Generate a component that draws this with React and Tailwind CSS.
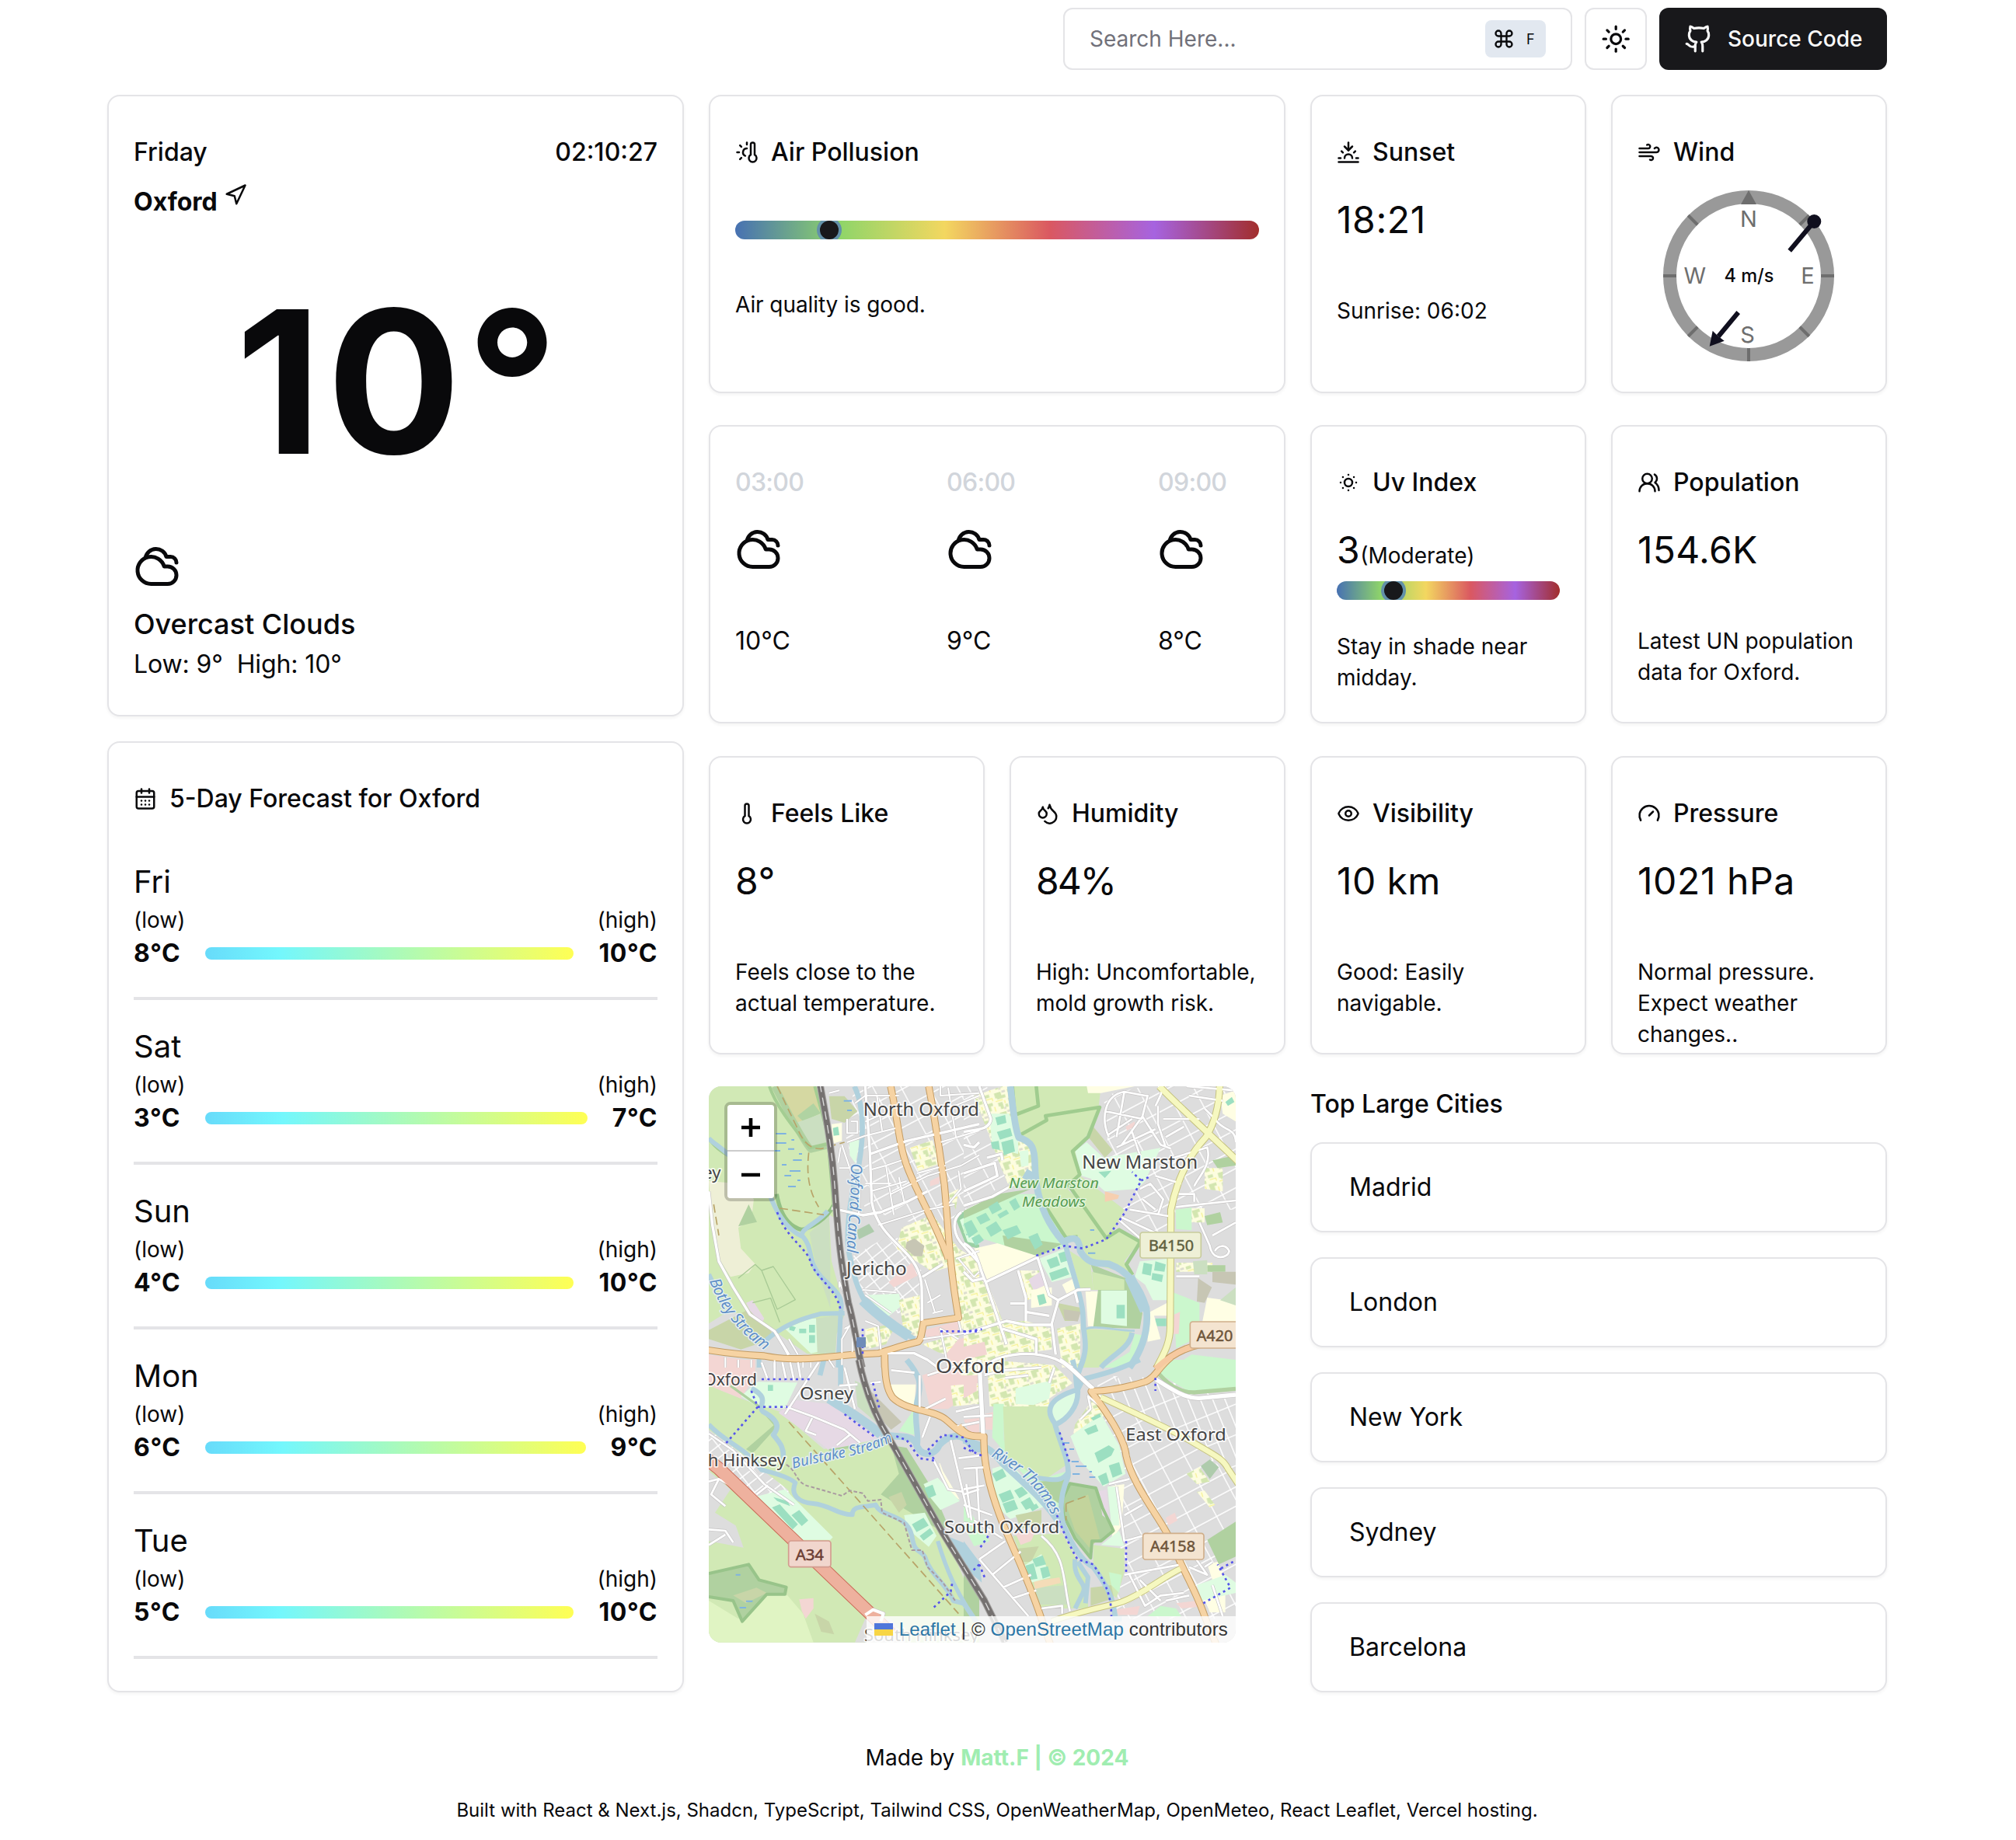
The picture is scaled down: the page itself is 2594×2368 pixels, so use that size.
import React from "react";
import {
  CalendarDays, Cloudy, Command, Droplets, Eye, Gauge, Github, Navigation, Sun, SunDim,
  Sunset, Thermometer, ThermometerSun, UsersRound, Wind,
} from "lucide-react";

const RAINBOW =
  "bg-[linear-gradient(90deg,#4771b2_0%,#8fd569_20%,#f3d760_40%,#da5861_60%,#a663e0_80%,#a22e2c_100%)]";
const TEMP =
  "bg-[linear-gradient(90deg,#67dbfa_0%,#73f7fd_20%,#ffff54_100%)]";

function Card({ className = "", children }) {
  return (
    <section className={"rounded-2xl border-2 border-[#e4e4e7] bg-white shadow-[0_2px_4px_rgba(0,0,0,0.05)] " + className}>
      {children}
    </section>
  );
}

function Title({ icon: Icon, children }) {
  return (
    <h2 className="flex h-8 items-center gap-4 text-[32px] leading-8 font-medium">
      <Icon size={30} strokeWidth={2} className="shrink-0" />
      <span className="whitespace-nowrap">{children}</span>
    </h2>
  );
}

function Scale({ value }) {
  return (
    <div className={"relative h-6 w-full overflow-hidden rounded-full " + RAINBOW}>
      <div
        className="absolute -top-1 size-8 -translate-x-1/2 rounded-full border-4 border-[#6a9db8]/90 bg-[#18181b]"
        style={{ left: value + "%" }}
      />
    </div>
  );
}

function Stat({ icon, title, value, text, tracking = "tracking-[0.6px]", children }) {
  return (
    <Card className="h-96 px-8 pt-[56px]">
      <Title icon={icon}>{title}</Title>
      {children || (
        <>
          <div className={"mt-[47px] h-12 text-[48px] leading-[48px] whitespace-nowrap " + tracking}>{value}</div>
          <p className="mt-[73px] text-[28px] leading-10">{text}</p>
        </>
      )}
    </Card>
  );
}

function Compass() {
  const ticks = [45, 90, 135, 180, 225, 270, 315];
  return (
    <svg width="220" height="220" viewBox="0 0 220 220" className="mt-[33px] ml-[33px] block overflow-visible font-['Inter',sans-serif]">
      <circle cx="110" cy="110" r="101.5" fill="none" stroke="#999" strokeWidth="17" />
      {ticks.map((t) => (
        <path key={t} d="M110 0V17" stroke="#6e6e6e" strokeWidth="4" transform={`rotate(${t} 110 110)`} />
      ))}
      <path d="M110 0L120 18H100Z" fill="#6e6e6e" />
      <g fill="#6e6e6e" fontSize="29" textAnchor="middle">
        <text x="110" y="47">N</text>
        <text x="40.7" y="119.5">W</text>
        <text x="186" y="119.5">E</text>
        <text x="108.5" y="196">S</text>
      </g>
      <text x="110.5" y="118" fontSize="24" fontWeight="500" textAnchor="middle" textLength="64" lengthAdjust="spacingAndGlyphs" fill="#09090b">4 m/s</text>
      <g stroke="#100f1e" strokeWidth="6" fill="#100f1e">
        <path d="M194.3 40L162.7 77.7M96.7 157L71 188" />
        <circle cx="194.3" cy="40" r="9" stroke="none" />
        <path d="M59.7 200.7L63.7 180.7L70 187L78.7 193.7Z" stroke="none" />
      </g>
    </svg>
  );
}

/* Map artwork: four quadrants, each drawn on its own 3x grid. */
const QUAD = {
  a: "translate(-12 -8) scale(.33333)",
  b: "translate(328 -8) scale(.33333)",
  c: "translate(-12 352) scale(.33333)",
  d: "translate(328 352) scale(.33333)",
};

const MEADOW = "#d1e9b5", WOOD = "#b0d1a0", REC = "#dffce2", PARK = "#cbf7cd", PITCH = "#9cdfc1",
  WATER = "#b0d1dd", SCHOOL = "#fffee4", PINK = "#f3d6d3", IND = "#e6d9e5", GROVE = "#cbdfc1", FARM = "#eeefd6", SCRUB = "#c8d5a8";

const AREAS = [
  ["a", "url(#st1)", "M600 24H1080V520L860 560L640 500L560 200Z"],
  ["a", "url(#st2)", "M590 680L750 590L860 740V900H700L610 800Z"],
  ["a", MEADOW, "M36 24H460L500 240L530 500L545 900L480 1060L36 1040Z"],
  ["a", "#dddddd", "M36 940L100 900L200 900L290 970L420 1060L36 1040ZM500 520L570 560L600 860L650 1000L540 1100L560 880L510 700Z"],
  ["a", "#d5d8a2", "M295 24H445L465 130L375 165L305 60Z"],
  ["a", "#b0d3a2", "M378 138L440 90L468 128L400 160Z"],
  ["a", GROVE, "M375 165L470 130L505 240L430 262Z"],
  ["a", SCRUB, "M500 62H560L610 120L560 165L510 150Z"],
  ["a", FARM, "M36 390L150 400L210 460L200 540L150 570L160 650L215 710L190 745L120 760L70 680L50 560Z"],
  ["a", WOOD, "M150 565L190 480L222 548L190 555Z"],
  ["a", GROVE, "M425 590L500 520L505 700V880L450 720Z"],
  ["a", GROVE, "M450 920L560 905L530 980L525 1055H455Z"],
  ["a", SCRUB, "M36 965L200 880L280 975L250 1010L160 1040L36 1000Z"],
  ["a", IND, "M180 860L205 850L250 920L240 940L195 890Z"],
  ["a", REC, "M330 960L430 920H450L455 1050L430 1055ZM640 830L770 825L782 870L722 918L680 880ZM578 232H620L602 322L580 290Z"],
  ["a", PITCH, "M347 945L372 955L365 970L347 965ZM385 960H412V977H385ZM423 945H446V975H423ZM423 985H446V1015H423Z"],
  ["a", SCHOOL, "M510 170L550 165V235L515 245Z"],
  ["a", PITCH, "M515 185L535 180L540 212L518 215Z"],
  ["a", "url(#col)", "M780 570L900 520L1000 650L1080 700V960H1010L970 720L900 740L760 650ZM640 960L760 940L720 1020L640 1040ZM860 1020L1000 980L1010 1080L920 1050ZM960 440L1000 420L990 500ZM770 850L850 830V990L790 980Z"],
  ["a", "url(#col)", "M812 262L900 232L925 325L845 352Z"],
  ["a", "#c7c6b4", "M800 625L830 612L868 640L860 680L830 680L795 650Z"],
  ["a", "#aecbac", "M607 580L655 555L675 585L615 615Z"],
  ["a", "#9bd0a4", "M985 525L1080 480V650L1030 640Z"],
  ["a", REC, "M1005 540L1080 500V635L1035 625Z"],
  ["a", PITCH, "M1018 560L1045 545L1060 590L1030 600ZM1055 540L1080 530V580L1062 585Z"],
  ["a", PINK, "M730 780L820 705L842 755L750 800ZM868 965L1000 930V980L880 1005ZM36 1060L210 1085V1120H36ZM1000 1000L1080 980V1120H960L950 1060ZM890 390L930 370L925 400L890 410Z"],

  ["b", "url(#st1)", "M540 60L700 24H1050V500H820L790 600L680 560L610 500L700 380L560 300Z"],
  ["b", "url(#st1)", "M0 24H90L160 300V400L0 500Z"],
  ["b", "url(#col)", "M40 60L150 24H180L200 180L270 260V400L170 400L130 300Z"],
  ["b", MEADOW, "M185 24H530L520 110L500 180L430 270L450 370L400 420L460 480L550 600L600 575L680 620L620 700L650 750L490 710L440 600L400 620L290 430L270 250L215 220Z"],
  ["b", MEADOW, "M410 410L450 370L620 500L560 620L460 480Z"],
  ["b", SCHOOL, "M475 24H660L530 50H480Z"],
  ["b", SCRUB, "M500 180L575 270L545 300L485 225Z"],
  ["b", REC, "M430 272L475 240L540 300L760 262L700 390L670 420L545 430L490 380L455 370Z"],
  ["b", "#f6cfb0", "M545 430L600 445L595 458L545 470Z"],
  ["b", PITCH, "M520 355L570 350L545 378Z"],
  ["b", REC, "M100 130H175L210 200V285L110 262ZM215 275L250 270V330L222 335Z"],
  ["b", PITCH, "M122 145L160 135L165 165L130 175ZM128 200L180 185L188 215L140 230ZM145 240L190 228L198 275L155 290ZM105 240L135 235L140 270L110 265Z"],
  ["b", PARK, "M0 520L200 440H290L390 620L380 645L280 680L160 640L0 590Z"],
  ["b", WOOD, "M0 505L130 440L260 420L190 450L0 535ZM150 600L380 632L290 680L160 650Z"],
  ["b", PITCH, "M0 555L30 540L55 585L20 610ZM48 530L85 512L103 540L65 558ZM95 490L130 468L148 498L110 518ZM85 570L125 545L148 580L105 605ZM150 580L205 560L222 590L170 615ZM30 610L60 595L78 618L45 640ZM250 605L285 590L305 635L275 655ZM175 470L200 455L218 490L195 505ZM130 520L165 500L175 515L140 535Z"],
  ["b", SCHOOL, "M40 650L130 630L280 678L90 770Z"],
  ["b", REC, "M290 690L390 650L420 760L340 780Z"],
  ["b", PITCH, "M320 695L360 680L372 715L335 728ZM365 670L395 660L408 695L375 705ZM330 745L395 722L408 750L340 775Z"],
  ["b", "url(#col)", "M0 760L90 780L150 930H240L340 960V1040L180 1060L130 1110H0Z"],
  ["b", "url(#col)", "M210 735H290L330 830L240 850ZM360 960L450 940V1110H380Z"],
  ["b", IND, "M250 770L295 740L320 790L270 812Z"],
  ["b", SCHOOL, "M260 810L340 800V870L260 880ZM380 790L490 730V800L400 830ZM470 815H530V950H480Z"],
  ["b", PITCH, "M283 832L310 825L320 860L292 870Z"],
  ["b", SCRUB, "M360 860L455 880L440 930L390 930Z"],
  ["b", "#c7c6b4", "M385 885L452 895L440 932L390 925Z"],
  ["b", MEADOW, "M410 660L490 710L500 810H450Z"],
  ["b", WOOD, "M490 710L640 770L690 900L680 960L500 955L520 800Z"],
  ["b", MEADOW, "M495 740L620 770V810H500ZM470 960L650 970L600 1060L520 1110H460Z"],
  ["b", REC, "M530 812H630V950L530 940Z"],
  ["b", PITCH, "M590 868H622V920H590Z"],
  ["b", PARK, "M660 980L690 985L640 1110H540L640 1050Z"],
  ["b", REC, "M680 700L790 690V850H730L700 790L660 760Z"],
  ["b", PITCH, "M695 705L728 712L722 755L688 748ZM740 700L780 712L775 740L735 735ZM728 745L770 752L765 780L725 770ZM740 920H782V950H735Z"],
  ["b", SCHOOL, "M710 900L785 860V910H735L760 1000L710 1010Z"],
  ["b", PARK, "M818 500L880 492V580L820 575ZM808 820L860 840L910 860V930L870 1010L820 1035Z"],
  ["b", "url(#col)", "M880 495H930V550H880ZM820 705H960V740H820ZM930 340H1000V430L930 420Z"],
  ["b", WOOD, "M960 310L1050 290V330L980 340ZM940 715H1010V740H940ZM930 525L990 510L1000 550L940 560Z"],
  ["b", "#c7c6b4", "M905 765L958 800L930 860L900 855ZM960 740H1050V790L960 780Z"],
  ["b", SCHOOL, "M940 840L1050 855V940H920ZM990 60L1050 40V160L1000 130Z"],
  ["b", GROVE, "M885 700L940 695V750H890ZM990 850L1050 800V870Z"],
  ["b", PITCH, "M1010 85L1035 65L1045 85L1020 100Z"],
  ["b", PINK, "M812 905L835 895L830 980L808 980ZM0 1030L80 1010L90 1060L0 1080ZM625 180L660 160V180L630 195Z"],
  ["b", PARK, "M800 1110L880 1060L1050 1080V1110Z"],

  ["c", "#dddddd", "M36 0H615L740 300L480 350L160 150L36 110Z"],
  ["c", PINK, "M36 0H215V60L160 150L36 100Z"],
  ["c", MEADOW, "M36 100L160 150L310 200L480 345L740 300L940 650L1080 990V1091H36Z"],
  ["c", "url(#st2)", "M36 270L120 330L340 500L370 560L220 530L120 430H36Z"],
  ["c", "#dddddd", "M36 430L120 500L60 590L140 640L170 725L36 700Z"],
  ["c", IND, "M305 205L370 155L580 180L700 300L500 350L440 300Z"],
  ["c", REC, "M160 140L225 85L378 88L330 188L225 182Z"],
  ["c", PITCH, "M264 97H284V120H264Z"],
  ["c", WOOD, "M180 345L290 250L296 262L205 360ZM740 330L800 340L900 500L960 640L930 660L700 520L770 440Z"],
  ["c", GROVE, "M600 80L640 100L720 280L680 240L610 180Z"],
  ["c", "#c7c6b4", "M640 100L720 180L780 240L740 270L690 220Z"],
  ["c", SCHOOL, "M735 95H835L830 175L785 182L745 150ZM925 400L970 385L1005 430V540L960 520Z"],
  ["c", PARK, "M770 275L825 195L830 290Z"],
  ["c", PINK, "M860 60L960 25L1080 0V140L1020 145L960 190L890 190Z"],
  ["c", "#dddddd", "M910 350L980 310L1080 370V640L1040 600L940 430Z"],
  ["c", "url(#col)", "M970 100L1080 90V170L980 180ZM1010 0H1080V60H1010Z"],
  ["c", REC, "M865 480L920 455L1005 545L930 580L890 530Z"],
  ["c", PITCH, "M868 495L900 482L914 522L885 535Z"],
  ["c", SCRUB, "M730 530L780 510L800 560L770 590Z"],
  ["c", REC, "M790 600L870 590L915 680L885 722L800 650Z"],
  ["c", PITCH, "M820 635L865 610L885 640L838 665ZM850 680L890 650L903 670L865 698Z"],
  ["c", REC, "M218 528L330 500L515 685L505 695L390 695Z"],
  ["c", PITCH, "M280 570L310 558L380 635L360 655ZM355 600L385 580L420 620L395 642ZM285 530L340 545L350 565L300 545Z"],
  ["c", WATER, "M955 680L1040 715L1085 800V900Z"],
  ["c", "#e0f4c3", "M36 930L150 1000L260 910L340 910L400 980L440 1091H36Z"],
  ["c", WOOD, "M36 825L190 790L230 850L335 880L330 908L260 910L170 1010L130 930L36 915Z"],
  ["c", SCRUB, "M130 910L220 880L260 900L180 940ZM445 980L500 1010L520 1060L470 1050Z"],
  ["c", PINK, "M385 925L440 920V960L410 1000L395 970Z"],
  ["c", "#dddddd", "M640 1000L740 1000L800 1091H600Z"],

  ["d", "url(#st1)", "M520 60L740 70L1050 150V1000H580L620 560L500 300Z"],
  ["d", "url(#st3)", "M600 60L740 80L900 150L1050 150V460L900 340L560 150Z"],
  ["d", "url(#col)", "M90 0L350 20L420 90L330 150V180H100Z"],
  ["d", "url(#col)", "M430 250L520 120L560 200L500 250L420 300Z"],
  ["d", "#dddddd", "M0 340L75 370L160 640L300 1000H130L0 780Z"],
  ["d", PINK, "M0 60H50V120L0 150ZM0 230L60 225V300L20 280ZM80 210L120 200V270H85Z"],
  ["d", PARK, "M115 170H155V310L300 460L400 430V600L330 560L110 300Z"],
  ["d", MEADOW, "M152 180H330L345 240L405 400L310 465L160 380Z"],
  ["d", WOOD, "M290 470L410 460L375 560L320 520Z"],
  ["d", REC, "M200 110L340 80L330 150L270 175L200 170Z"],
  ["d", REC, "M440 115L330 180L350 250L420 200Z"],
  ["d", REC, "M110 420L180 400L330 560L180 615L120 560Z"],
  ["d", PITCH, "M110 440L150 420L165 450L125 470ZM135 520L180 502L195 535L150 552ZM195 505L225 490L248 515L215 535ZM150 555L195 540L210 575L165 592ZM220 550L255 530L275 565L240 580ZM255 570L280 555L290 570L265 585Z"],
  ["d", REC, "M412 295L530 210L600 330L625 440L540 490L450 390Z"],
  ["d", PITCH, "M465 270L510 250L520 275L480 290ZM505 360L560 330L582 345L570 370L520 398ZM560 408L600 395L612 440L575 455ZM518 450L550 435L562 475L535 485ZM490 225L525 208L530 220L500 235Z"],
  ["d", SCHOOL, "M560 490L620 480L610 640L570 700L580 620Z"],
  ["d", REC, "M555 490L595 490L600 640L570 640ZM530 715L600 660L620 720Z"],
  ["d", WOOD, "M410 478L510 495L535 570L578 660L530 700H495L490 765L430 690L385 600L380 540Z"],
  ["d", "#c3d49c", "M395 560L480 520L525 690L485 725L430 660Z"],
  ["d", IND, "M520 508L552 500L562 622L535 600Z"],
  ["d", MEADOW, "M190 680L380 670L430 760L480 850V960H300L240 800Z"],
  ["d", MEADOW, "M500 715L620 730V820L590 920L540 880L500 800Z"],
  ["d", SCRUB, "M200 730L290 720L260 780L220 780ZM490 880L570 870L580 920L490 950ZM200 600L300 580V640L220 650Z"],
  ["d", GROVE, "M270 880L400 870V945H280Z"],
  ["d", "#f4dcb8", "M270 855L370 840L375 862L275 885Z"],
  ["d", REC, "M225 800L300 750L335 840L260 860Z"],
  ["d", PITCH, "M238 795L270 785L285 845L255 850ZM265 770L305 755L318 790L278 800ZM295 805L325 797L335 835L305 845Z"],
  ["d", PINK, "M200 670L280 655L260 700L220 715ZM780 610L815 590L825 620L790 640ZM580 965L680 950L670 985H600ZM820 940L900 930L900 955L840 960Z"],
  ["d", PARK, "M560 820L610 830L600 900L570 870ZM710 990L760 950L820 960L840 991ZM0 550L100 700L40 720L0 640Z"],
  ["d", "#aecbac", "M915 410L950 385L985 415L950 460Z"],
  ["d", "url(#col)", "M860 440L910 415L950 470L900 480ZM900 510L930 505L970 560L950 570Z"],
  ["d", WOOD, "M940 695L1050 625V760L985 790Z"],
  ["d", SCHOOL, "M940 790L980 780L1010 850L960 850ZM930 920L1010 890V975H950Z"],
  ["d", REC, "M900 870L1010 830L1050 860V900L920 930Z"],
  ["d", PARK, "M750 50L810 0H1050V115L880 130Z"],
  ["d", WATER, "M0 700L60 780L70 860L0 800Z"],
  ["d", WOOD, "M0 830L60 900L60 991H0Z"],
];

const ROADS = [
  ["line", "a", WOOD, 26, "M290 24L345 130C380 190 410 250 430 268L505 250"],
  ["line", "a", "#93c185", 16, "M500 250L520 480C490 540 430 570 395 578C340 565 310 510 298 440"],
  ["line", "a", "#a4cd92", 12, "M270 24C300 110 370 190 425 262L505 245M36 225C60 260 90 280 110 290M445 24L505 245"],
  ["line", "b", "#a0cc8f", 14, "M188 24L197 135L288 100L280 24M212 215L320 155L316 138L525 105L480 220L420 275L448 365L405 405L550 610L600 578L682 625L628 712L652 752M285 440L395 610L440 605"],
  ["line", "c", "#98c48a", 12, "M36 825L190 790L230 850L335 878L330 905L260 905L165 1010L130 930L36 915"],
  ["line", "d", "#98c48a", 12, "M410 478L510 495L535 570L578 660L530 700H495L490 765L430 690L385 600L380 540Z"],
  ["line", "d", WOOD, 16, "M750 50C800 110 850 130 900 125L1050 112"],
  ["line", "c", WOOD, 10, "M120 100L230 180L300 260M210 350L295 255M500 350L740 310"],
  ["line", "a", "#a8ca95", 4, "M150 765L215 712L240 735L285 720L370 848L300 885L240 735M205 860L275 842L310 935"],
  ["line", "a", WATER, 18, "M36 225C60 250 110 275 140 320L270 440C300 520 340 580 400 605C440 650 415 700 470 760C520 810 560 830 545 900L535 1110M400 600C380 580 460 550 495 505M250 1010C330 940 400 920 470 902L560 900M36 750L60 800M230 1050V1110"],
  ["line", "a", WATER, 20, "M598 24C640 110 632 230 615 330C575 480 560 620 585 700C600 780 620 830 650 870C700 910 760 960 830 1000"],
  ["line", "a", WATER, 40, "M630 850C680 900 730 940 810 990"],
  ["line", "b", WATER, 26, "M180 24C190 100 195 180 213 222C265 238 274 262 275 330C278 480 335 570 385 625C430 600 445 610 450 660C480 715 520 705 560 710C640 740 680 800 705 880C715 960 690 1040 640 1110"],
  ["line", "b", WATER, 20, "M392 630C410 720 455 830 460 900L463 960C472 1020 475 1050 450 1110M650 975C640 1040 570 1060 530 1110"],
  ["line", "b", WATER, 8, "M465 965C490 940 600 970 660 968"],
  ["line", "b", WATER, 40, "M235 360L270 380M640 760L700 890"],
  ["line", "c", WATER, 18, "M36 250C100 320 180 340 240 425C300 440 350 455 370 475C350 520 380 550 440 555C500 560 540 600 590 598C590 560 640 570 680 560C700 610 800 590 820 680C830 750 850 730 870 760C890 830 950 860 980 930L1020 941L1080 1030"],
  ["line", "c", WATER, 20, "M200 110C280 150 220 180 245 200C320 240 300 270 285 290C310 320 330 340 322 390M480 0L465 60M545 0V100"],
  ["line", "c", WATER, 36, "M500 150C560 190 650 240 700 290"],
  ["line", "c", WATER, 26, "M700 290C780 300 815 290 835 320C850 380 910 370 925 330C960 290 1010 280 1040 320C1060 350 1080 345 1110 345"],
  ["line", "c", WATER, 22, "M800 0C850 60 860 90 840 160C825 240 850 290 840 330"],
  ["line", "c", WATER, 16, "M920 700C950 800 990 910 1100 1050"],
  ["line", "d", WATER, 20, "M420 0C440 60 430 100 440 115C445 180 400 230 355 250C315 200 320 150 440 115M350 240C370 320 410 390 403 450C370 530 370 600 390 650C420 720 460 780 500 800C560 880 580 930 585 1000L610 1000M680 0C590 40 560 50 460 75L440 115L440 60L460 0"],
  ["line", "d", WATER, 18, "M405 430C380 480 330 460 280 455M430 770C420 850 480 860 460 900L430 960M440 780L480 840L470 940"],
  ["line", "d", WATER, 26, "M0 310C60 330 100 330 150 400C250 490 330 560 375 640"],

  ["road", "a", "#fff", 6, "M500 50L540 40M550 250L600 400M540 340H640M545 260L535 320M585 160H610V205H570V150M600 90L640 60H770M685 60L705 195M640 160L780 100M570 240L640 215L760 185M930 240L1080 195M840 360L950 330M960 30L990 220M930 24V60L1080 50M720 330L780 310M665 345L720 330L750 520M740 440L880 370L1010 330L1080 290M770 375L790 470M640 400L740 400M620 340L615 520M660 430L800 390M690 560L880 500L985 480M1000 350L1010 420L950 490M960 110L1080 60"],
  ["road", "a", "#fff", 10, "M640 24L658 280L665 470C680 560 740 610 790 660C840 710 855 750 858 800L860 930M660 285L800 235L1080 170M510 495L630 522L700 510L800 470L880 430M1010 510C970 540 980 600 1020 640L1075 700M36 430L50 560L75 700L130 800L195 905L290 970L345 1060M725 1055H830L880 1080L920 1110M860 760L940 710"],
  ["road", "a", "#fff", 6, "M300 980L340 1060M345 1000L380 1060M540 800V780L570 850M560 960L600 940M550 1100V1000L590 930M590 930V1060M100 1070V1110M150 1080V1110M200 1080V1110M290 1080V1110M400 1090V1110M430 1090V1110M500 1080L520 1110M640 930L690 950L700 1040M640 830L740 900M630 810L760 820M870 770L910 900M880 860L930 830M900 900L940 890M960 1110L930 960L1000 1000M860 1000L1080 970M990 690L1080 660M1000 690L1060 760L1080 740M1010 970L1000 930"],
  ["road", "b", "#fff", 8, "M560 220C530 150 540 60 620 45L700 60H710L690 140L760 250L800 265M740 100C760 60 780 24 750 24M545 120L690 150M620 45L590 220M590 260L740 190M650 150L560 210M690 140L610 250M650 200L680 290M860 24L1050 40M930 110L970 150M750 100V170L780 260M770 150L910 150M780 220L850 180M870 60L1000 80M810 300L940 260C960 330 900 380 890 410M610 530L740 590M640 500L790 525M680 420L720 400L770 460L750 520M690 460L740 500M740 370L840 400M820 490L1050 465M830 440H890V470M910 550L950 640C960 700 1020 690 1025 660C1010 630 980 640 970 660M960 600L1050 550M820 758H910M600 540L680 610M970 150C1000 200 1050 180 1050 240"],
  ["road", "b", "#fff", 10, "M0 485L110 450L200 400M0 360L120 320L130 370L0 430M0 250L40 260L60 240M90 300L145 285L150 310M60 24L105 150C100 190 60 190 0 200M0 630C60 660 55 720 85 780L165 1020M85 780L285 685L330 830L365 850L340 940L355 1060M365 850L440 810L490 808M340 945H240L165 930L0 980M150 960L280 1000V1060M210 735L240 840V930M240 895L330 910M180 862H240M80 1110C120 1060 250 1040 350 1075L420 1110M430 820L440 860M0 740L35 775L80 765"],
  ["road", "c", "#fff", 8, "M240 10L265 80M290 10V80M320 10L335 80M350 10L365 80M380 10L390 70M460 10L330 210M560 30L600 190M540 100L610 95M330 180L440 220L560 270L620 320M435 225L410 275L450 290M580 290L530 330M36 285L130 350L250 480L365 560M220 520L265 485M36 470L75 460L120 485M75 460L45 520L100 565M36 655L100 660L130 705M36 715L100 675M740 40L830 50M850 60L850 200L950 150M880 60L1000 20M660 90L700 85M970 310L1040 610M900 380L960 500L1020 510M860 300L890 220M990 200L1080 180M980 260L1080 240M1000 380L1080 370M1020 520L1080 500"],
  ["road", "d", "#fff", 8, "M80 60L160 40L300 30M160 70L250 60M330 90L350 30M0 50L40 10M0 220L110 215M0 420L80 415M0 500L80 485M10 480L30 620M50 420L60 620M0 560L110 600M40 620L150 690M60 770L160 700M60 770L250 990M110 830L220 740M150 880L260 830M190 920L280 890M0 630L60 640M300 680C400 760 380 850 410 970M300 960L380 950L380 980M450 230L490 190L480 140L540 190M560 480L640 460M590 490L620 700L690 680M620 600L690 560M620 830L840 790M640 830L700 950L760 910L850 900M680 850L760 930M870 800L940 830L890 760M780 930L870 910M930 800L960 780M1000 990L960 870"],
  ["road", "d", "#fff", 16, "M60 0L75 290M370 0C420 30 460 80 500 112M740 75C800 110 850 150 910 148L1050 135"],

  ["road", "c", "#eeb19e", 46, "M30 385L75 420L680 1000L740 1060", "#c96c58"],
  ["road", "c", "#fff", 12, "M640 985L670 965L710 980L700 1010"],
  ["road", "b", "#f6f8c0", 22, "M755 24C850 120 940 200 1060 315M988 24C985 120 960 180 935 220C860 300 820 400 800 500L797 950C797 1020 770 1060 745 1110", "#c5c27f"],
  ["road", "d", "#f6f8c0", 20, "M530 145C650 200 800 270 870 310C970 370 1000 380 1020 420L1060 480M340 1010C450 970 560 950 610 935C700 900 750 850 840 805", "#c5c27f"],
  ["road", "a", "#f6d3a3", 22, "M738 24C760 120 765 200 785 280C810 390 910 540 960 690M885 24C910 150 930 300 945 400C955 500 960 600 970 700C980 800 990 860 1000 918L865 938C855 990 855 1000 845 1010C780 1025 740 1040 690 1055L590 1060C450 1075 350 1085 250 1065C150 1060 80 1050 30 1042M715 1050V1110", "#c39b62"],
  ["road", "c", "#f6d3a3", 22, "M715 -30C715 60 720 110 745 145C800 200 900 190 950 230C1000 270 1010 300 1100 296", "#c39b62"],
  ["road", "d", "#f6d3a3", 22, "M-20 255C20 310 60 290 78 296C75 400 100 500 150 630C200 750 250 850 300 1000L335 1100M800 -10C750 30 740 70 700 85C620 110 560 120 492 122C550 200 620 300 627 370C650 480 750 600 790 680C850 820 900 900 930 990L975 1100", "#c39b62"],
  ["road", "b", "#f6c9a0", 22, "M740 1115C800 1060 860 1030 920 1020L1060 1000", "#c39b62"],
];

const RAILS = [
  ["a", "M465 15C490 150 515 280 525 450C535 600 545 700 575 860C600 950 610 1040 628 1110"],
  ["c", "M615 0C640 120 680 220 730 300C800 420 900 600 940 670L1100 930"],
  ["d", "M0 800L80 930L160 1091"],
];

const DOTS = [
  ["a", "M300 510C330 600 400 640 425 690C440 760 530 800 545 890M630 960L630 1060M930 970H1080"],
  ["b", "M280 678L390 640L460 650L550 615L620 515L685 388L650 355M685 388L725 370M0 972L70 962"],
  ["c", "M240 75H430M200 120L225 182L340 182M225 182L100 325M560 210L680 300M670 90L695 190M760 295L800 310L850 380L910 390L880 350L940 290L1020 300L1060 360M1080 790L1050 820M975 865L970 895L900 960"],
  ["d", "M0 340L70 370M360 600C390 680 430 760 440 770L500 790C540 850 570 900 570 990M370 280L410 400M627 700V830M925 940L1030 880L980 790M1040 780L985 810M740 70V120M95 680L60 730M60 790L85 850"],
];

const BROWN = [
  ["a", "M300 24L380 190C400 240 430 268 470 265L560 240M422 280C410 380 430 440 460 490M310 495L480 520M55 480L75 600"],
  ["c", "M345 240L620 550L1000 980"],
  ["d", "M395 555L485 522M395 555V620"],
];

const PATHS = [
  ["c", "M335 405C380 430 370 480 430 490L550 525L580 505L630 515L650 545L700 540L705 590L790 630L820 735L860 735L880 800L940 860L990 935"],
];

const MARSH = [
  ["a", "M295 207H335M295 243H335M342 266H366M355 231H366M384 285H396M361 309H395M318 327H336M348 351H390M328 369H354M378 387H390M342 411H372M557 80H588M570 117H588M290 273H312"],
  ["d", "M380 321H408M408 345H426M416 393H444M432 411H474M420 441H448M485 453H508M485 432H495"],
  ["b", "M488 579H504M480 668H508"],
  ["c", "M180 932H205M155 957H180M140 830H158"],
];

const LABELS = [
  ["a", "North Oxford", 632, 138, 68, 448],
  ["a", "Jericho", 567, 752, 68, 233],
  ["b", "New Marston", 457, 342, 68, 446],
  ["c", "Oxford", 912, 50, 78, 268],
  ["c", "Osney", 387, 152, 66, 207],
  ["c", "Oxford", 16, 100, 66, 206],
  ["c", "South Oxford", 945, 670, 66, 445],
  ["d", "East Oxford", 625, 313, 66, 388],
];

function Shield({ q, x, y, w, h, fill, stroke, color, tx, tw, ty, children }) {
  return (
    <g transform={QUAD[q]}>
      <rect x={x} y={y} width={w} height={h} rx="10" fill={fill} stroke={stroke} strokeWidth="5" />
      <text x={tx} y={ty} fontSize="60" textLength={tw} lengthAdjust="spacingAndGlyphs" fill={color} stroke={color} strokeWidth="1.5">{children}</text>
    </g>
  );
}

function MapArt() {
  const roads = ROADS.filter((r) => r[0] === "road");
  const lines = ROADS.filter((r) => r[0] === "line");
  const street = (id, w, h, angle) => (
    <pattern id={id} width={w} height={h} patternUnits="userSpaceOnUse" patternTransform={`rotate(${angle})`}>
      <rect width={w} height={h} fill="#dddddd" />
      <path d={`M0 0H${w}M0 0V${h}`} stroke="#c9c7c7" strokeWidth="13" />
      <path d={`M0 0H${w}M0 0V${h}`} stroke="#fff" strokeWidth="10" />
    </pattern>
  );
  return (
    <svg width="678" height="716" viewBox="0 0 678 716" className="block font-['Noto_Sans',sans-serif]">
      <defs>
        {street("st1", 96, 66, -28)}
        {street("st2", 50, 38, -38)}
        {street("st3", 110, 44, 68)}
        <pattern id="col" width="92" height="78" patternUnits="userSpaceOnUse" patternTransform="rotate(-17)">
          <rect width="92" height="78" fill="#fdfde0" />
          <path d="M4 6H30V20H44V32H10V26H4ZM56 4H76V16H56ZM50 38H80V50H70V68H52ZM8 46H26V72H14V60H8ZM34 58H44V70H34Z" fill="#d3e6b0" />
          <path d="M60 22H84V32M36 42V54M2 38H30M84 56V74" fill="none" stroke="#f6f294" strokeWidth="4" />
          <path d="M34 4H48V12H34ZM30 66H34V76H24Z" fill="#dcdccf" />
        </pattern>
        <path id="lblCanal" d="M584 322C590 440 572 540 568 690" />
        <path id="lblBotley" d="M38 775C80 880 130 960 275 1060" />
        <path id="lblBulstake" d="M362 420C480 385 640 375 756 308L860 240" />
        <path id="lblThames" d="M105 372C190 420 290 480 345 612L355 640" />
      </defs>
      <rect width="678" height="716" fill="#dddddd" />
      {AREAS.map(([q, fill, d], i) => <path key={i} transform={QUAD[q]} d={d} fill={fill} />)}
      <g fill="none" strokeLinejoin="round">
        {lines.map(([, q, c, w, d], i) => <path key={i} transform={QUAD[q]} d={d} stroke={c} strokeWidth={w} />)}
        {BROWN.map(([q, d], i) => <path key={i} transform={QUAD[q]} d={d} stroke="#b8a368" strokeWidth="5" strokeDasharray="32 16" />)}
        {PATHS.map(([q, d], i) => <path key={i} transform={QUAD[q]} d={d} stroke="#a99aa0" strokeWidth="6" strokeDasharray="14 8" />)}
        {MARSH.map(([q, d], i) => <path key={i} transform={QUAD[q]} d={d} stroke="#7fb3e0" strokeWidth="6" />)}
        {roads.map(([, q, , w, d, casing], i) => (
          <path key={i} transform={QUAD[q]} d={d} stroke={casing || "#c6c4c4"} strokeWidth={w + (casing ? 6 : 4)} />
        ))}
        {roads.map(([, q, c, w, d], i) => <path key={i} transform={QUAD[q]} d={d} stroke={c} strokeWidth={w} />)}
        {RAILS.map(([q, d], i) => (
          <g key={i} transform={QUAD[q]}>
            <path d={d} stroke="#a9a7a5" strokeWidth="28" />
            <path d={d} stroke="#757170" strokeWidth="22" />
            <path d={d} stroke="#dcdcdc" strokeWidth="4" strokeDasharray="32 22" />
          </g>
        ))}
        {DOTS.map(([q, d], i) => <path key={i} transform={QUAD[q]} d={d} stroke="#5555ea" strokeWidth="8" strokeDasharray="9 13" />)}
      </g>
      <rect x="190" y="323" width="12" height="13" fill="#6f8cb8" />
      <g fontSize="60" fontStyle="italic" fill="#5f8fc6" stroke="#e6f0f2" strokeWidth="8" strokeLinejoin="round" paintOrder="stroke">
        <text transform={QUAD.a} textLength="345"><textPath href="#lblCanal">Oxford Canal</textPath></text>
        <text transform={QUAD.a} textLength="350"><textPath href="#lblBotley">Botley Stream</textPath></text>
        <text transform={QUAD.c} fontSize="56"><textPath href="#lblBulstake">Bulstake Stream</textPath></text>
        <text transform={QUAD.d} textLength="335"><textPath href="#lblThames">River Thames</textPath></text>
      </g>
      <g fontStyle="italic" fontSize="56" fill="#569b50" stroke="#e3f6dd" strokeWidth="8" paintOrder="stroke" transform={QUAD.b}>
        <text x="175" y="418" textLength="347" lengthAdjust="spacingAndGlyphs">New Marston</text>
        <text x="225" y="490" textLength="246" lengthAdjust="spacingAndGlyphs">Meadows</text>
      </g>
      <g fill="#444" stroke="#fff" strokeOpacity="0.75" strokeWidth="11" paintOrder="stroke" strokeLinejoin="round">
        {LABELS.map(([q, t, x, y, size, len]) => (
          <text key={t + x} transform={QUAD[q]} x={x} y={y} fontSize={size} textLength={len} lengthAdjust="spacingAndGlyphs">{t}</text>
        ))}
        <text transform={QUAD.c} x="333" y="411" fontSize="66" textAnchor="end">North Hinksey</text>
        <text transform={QUAD.a} x="82" y="380" fontSize="66" textAnchor="end">Botley</text>
        <text transform={QUAD.c} x="636" y="1086" fontSize="66">South Hinksey</text>
      </g>
      <Shield q="b" x={681} y={588} w={235} h={99} fill="#eef0d6" stroke="#c8cb9b" color="#5f6040" tx={714} tw={174} ty={661}>B4150</Shield>
      <Shield q="b" x={874} y={933} w={220} h={102} fill="#f4e4d0" stroke="#cfae8a" color="#6d543a" tx={899} tw={140} ty={1007}>A420</Shield>
      <Shield q="c" x={344} y={699} w={163} h={101} fill="#f1d6cd" stroke="#d39c8f" color="#6b3d33" tx={371} tw={109} ty={773}>A34</Shield>
      <Shield q="d" x={692} y={670} w={235} h={101} fill="#f4e4d0" stroke="#cfae8a" color="#6d543a" tx={720} tw={174} ty={741}>A4158</Shield>
    </svg>
  );
}

function MapPanel() {
  return (
    <div className="relative h-[716px] w-[678px] overflow-hidden rounded-2xl font-['Liberation_Sans',sans-serif]">
      <MapArt />
      <div className="absolute top-5 left-5 w-[68px] rounded-lg border-4 border-black/20 bg-clip-padding">
        <div className="flex h-[60px] items-center justify-center rounded-t-[4px] border-b-2 border-[#ccc] bg-white">
          <svg width="24" height="24" viewBox="0 0 24 24"><path d="M0 12H24M12 0V24" stroke="#000" strokeWidth="4.6" /></svg>
        </div>
        <div className="flex h-[60px] items-center justify-center rounded-b-[4px] bg-white">
          <svg width="24" height="24" viewBox="0 0 24 24"><path d="M0 12H24" stroke="#000" strokeWidth="4.6" /></svg>
        </div>
      </div>
      <div className="absolute right-0 bottom-0 flex h-[34px] items-center bg-white/80 px-[10px] text-[24px] leading-[34px] tracking-[0.15px] whitespace-pre text-[#333]">
        <svg width="24" height="16" viewBox="0 0 24 16" className="mr-2">
          <path fill="#5076da" d="M0 0H24V8H0Z" />
          <path fill="#f7d546" d="M0 8H24V16H0Z" />
        </svg>
        <span className="text-[#2c76a6]">Leaflet</span>
        <span> | © </span>
        <span className="text-[#2c76a6]">OpenStreetMap</span>
        <span> contributors</span>
      </div>
    </div>
  );
}

const DAYS = [
  ["Fri", 8, 10], ["Sat", 3, 7], ["Sun", 4, 10], ["Mon", 6, 9], ["Tue", 5, 10],
];
const HOURS = [["03:00", 10], ["06:00", 9], ["09:00", 8]];
const CITIES = ["Madrid", "London", "New York", "Sydney", "Barcelona"];

export default function App() {
  return (
    <div className="h-[2368px] w-[2594px] overflow-hidden bg-white pt-[10px] pl-[138px] font-['Inter',sans-serif] text-[#09090b]">
      <div className="w-[2290px]">
        <header className="flex h-20 justify-end gap-4">
          <div className="flex w-[655px] items-center justify-between rounded-xl border-2 border-[#e4e4e7] pr-8 pl-8 text-[28px] text-[#71717a]">
            <span>Search Here...</span>
            <kbd className="flex h-12 w-[78px] items-center gap-[15px] rounded-lg bg-[#e2e8f0] pl-[10px] font-['Inter',sans-serif] text-[18px] text-[#09090b]">
              <Command size={28} strokeWidth={2} />
              <span>F</span>
            </kbd>
          </div>
          <button className="flex size-20 items-center justify-center rounded-xl border-2 border-[#e4e4e7]">
            <Sun size={38.4} strokeWidth={2} />
          </button>
          <button className="flex w-[293px] items-center rounded-xl bg-[#18181b] pl-8 text-[28px] font-medium whitespace-nowrap text-[#fafafa]">
            <Github size={38} strokeWidth={2} className="mr-[18px]" />
            Source Code
          </button>
        </header>

        <main className="mt-8 grid grid-cols-[742px_1fr] gap-8">
          <div className="flex flex-col gap-8">
            <Card className="flex h-[800px] flex-col px-8 pt-[56px]">
              <div className="flex h-8 items-center justify-between text-[32px] leading-8 font-medium">
                <span>Friday</span>
                <span>02:10:27</span>
              </div>
              <div className="mt-6 flex h-16 text-[32px] leading-[48px] font-bold">
                <span>Oxford</span>
                <Navigation size={30} strokeWidth={2} className="ml-2" />
              </div>
              <div className="mt-[63px] flex h-64 items-center justify-center pl-[10px] text-[256px] leading-none font-bold tracking-[7px]">10°</div>
              <Cloudy size={60} strokeWidth={2} className="mt-[80px]" />
              <div className="mt-[26px] text-[36px] leading-[36px] font-medium">Overcast Clouds</div>
              <div className="mt-[14px] text-[32px] leading-10 tracking-[-0.1px] whitespace-pre">Low: 9°  High: 10°</div>
            </Card>
            <Card className="h-[1224px] px-8 pt-[56px]">
              <Title icon={CalendarDays}>5-Day Forecast for Oxford</Title>
              <div className="pt-[31px]">
                {DAYS.map(([day, low, high]) => (
                  <div key={day} className="h-[212px] border-b-4 border-[#e4e4e7] pt-9">
                    <div className="text-[40px] leading-[48px]">{day}</div>
                    <div className="flex justify-between pt-[5px] text-[28px] leading-10">
                      <span>(low)</span>
                      <span>(high)</span>
                    </div>
                    <div className="flex items-center gap-8 pt-[3px] text-[32px] leading-10 font-bold tracking-[0.6px]">
                      <span>{low}°C</span>
                      <div className={"h-4 flex-1 rounded-full " + TEMP} />
                      <span>{high}°C</span>
                    </div>
                  </div>
                ))}
              </div>
            </Card>
          </div>

          <div className="flex flex-col gap-[41.4px]">
            <div className="grid grid-cols-[742px_355px_355px] gap-8">
              <Card className="h-96 px-8 pt-[56px]">
                <Title icon={ThermometerSun}>Air Pollusion</Title>
                <div className="mt-[72px]"><Scale value={18} /></div>
                <p className="mt-16 text-[28px] leading-10 tracking-[-0.08px]">Air quality is good.</p>
              </Card>
              <Stat icon={Sunset} title="Sunset" value="18:21" text="Sunrise: 06:02" />
              <Stat icon={Wind} title="Wind"><Compass /></Stat>
            </div>

            <div className="grid grid-cols-[742px_355px_355px] gap-8">
              <Card className="h-96 overflow-hidden px-8 pt-[56px]">
                <div className="grid grid-cols-[repeat(3,272px)]">
                  {HOURS.map(([hour, temp]) => (
                    <div key={hour} className="flex flex-col">
                      <span className="text-[32px] leading-8 font-medium tracking-[-0.7px] text-[#d1d5db]">{hour}</span>
                      <Cloudy size={60} strokeWidth={2} className="mt-10" />
                      <span className="mt-[68px] text-[32px] leading-10">{temp}°C</span>
                    </div>
                  ))}
                </div>
              </Card>
              <Stat icon={SunDim} title="Uv Index">
                <div className="mt-[47px] flex h-12 items-baseline text-[48px] leading-[48px]">
                  <span className="tracking-[0.6px]">3</span>
                  <span className="text-[28px]">(Moderate)</span>
                </div>
                <div className="mt-4"><Scale value={25.3} /></div>
                <p className="mt-10 text-[28px] leading-10">Stay in shade near midday.</p>
              </Stat>
              <Stat icon={UsersRound} title="Population" value="154.6K" tracking="tracking-[0.3px]" text="Latest UN population data for Oxford." />
            </div>

            <div className="grid grid-cols-4 gap-8">
              <Stat icon={Thermometer} title="Feels Like" value="8°" text="Feels close to the actual temperature." />
              <Stat icon={Droplets} title="Humidity" value="84%" tracking="tracking-[-2px]" text={<>High: Uncomfortable,<br />mold growth risk.</>} />
              <Stat icon={Eye} title="Visibility" value="10 km" tracking="tracking-[0.4px]" text="Good: Easily navigable." />
              <Stat icon={Gauge} title="Pressure" value="1021 hPa" text="Normal pressure. Expect weather changes.." />
            </div>

            <div className="grid grid-cols-2 gap-8">
              <MapPanel />
              <div>
                <h3 className="h-[71.6px] pt-[7px] text-[32px] leading-8 font-medium">Top Large Cities</h3>
                <ul className="flex flex-col gap-8">
                  {CITIES.map((city) => (
                    <li key={city}>
                      <Card className="flex h-[116px] items-center px-12 text-[32px]">{city}</Card>
                    </li>
                  ))}
                </ul>
              </div>
            </div>
          </div>
        </main>

        <footer className="mt-16 text-center">
          <p className="text-[28px] leading-10">
            Made by <span className="font-bold text-[#a0edb1]">Matt.F | © 2024</span>
          </p>
          <p className="mt-7 text-[24px] leading-10">
            Built with React &amp; Next.js, Shadcn, TypeScript, Tailwind CSS, OpenWeatherMap, OpenMeteo, React Leaflet, Vercel hosting.
          </p>
        </footer>
      </div>
    </div>
  );
}
